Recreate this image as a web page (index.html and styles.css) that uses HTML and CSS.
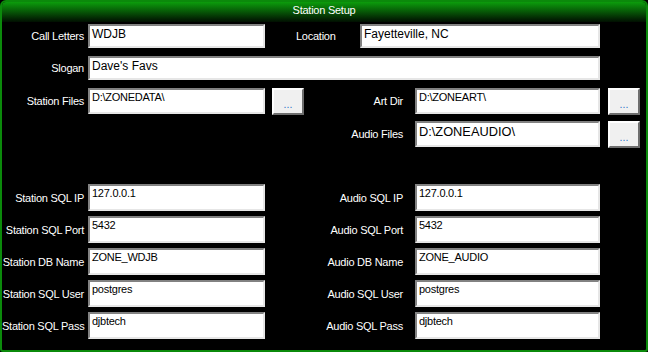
FILE: index.html
```html
<!DOCTYPE html>
<html lang="en">
<head>
    <meta charset="UTF-8">
    <title>Station Setup</title>
    <link rel="stylesheet" href="styles.css">
</head>
<body>
    <div class="window">
        <div class="titlebar">Station Setup</div>
        <div class="content">

            <div class="row r1">
                <span class="label lbl-left">Call Letters</span>
                <div class="field big w-left">WDJB</div>
                <span class="label lbl-location">Location</span>
                <div class="field big w-loc">Fayetteville, NC</div>
            </div>

            <div class="row r1">
                <span class="label lbl-left">Slogan</span>
                <div class="field big w-slogan">Dave's Favs</div>
            </div>

            <div class="row r3">
                <span class="label lbl-left">Station Files</span>
                <div class="field w-left">D:\ZONEDATA\</div>
                <button class="browse b-left">...</button>
                <span class="label lbl-art">Art Dir</span>
                <div class="field w-right">D:\ZONEART\</div>
                <button class="browse">...</button>
            </div>

            <div class="row r4">
                <span class="label lbl-art">Audio Files</span>
                <div class="field big2 w-right">D:\ZONEAUDIO\</div>
                <button class="browse">...</button>
            </div>

            <div class="sql">
                <div class="row sqlrow">
                    <span class="label lbl-left">Station SQL IP</span>
                    <div class="field w-left">127.0.0.1</div>
                    <span class="label lbl-right">Audio SQL IP</span>
                    <div class="field w-right">127.0.0.1</div>
                </div>
                <div class="row sqlrow">
                    <span class="label lbl-left">Station SQL Port</span>
                    <div class="field w-left">5432</div>
                    <span class="label lbl-right">Audio SQL Port</span>
                    <div class="field w-right">5432</div>
                </div>
                <div class="row sqlrow">
                    <span class="label lbl-left">Station DB Name</span>
                    <div class="field w-left">ZONE_WDJB</div>
                    <span class="label lbl-right">Audio DB Name</span>
                    <div class="field w-right">ZONE_AUDIO</div>
                </div>
                <div class="row sqlrow">
                    <span class="label lbl-left">Station SQL User</span>
                    <div class="field w-left">postgres</div>
                    <span class="label lbl-right">Audio SQL User</span>
                    <div class="field w-right">postgres</div>
                </div>
                <div class="row sqlrow">
                    <span class="label lbl-left">Station SQL Pass</span>
                    <div class="field w-left">djbtech</div>
                    <span class="label lbl-right">Audio SQL Pass</span>
                    <div class="field w-right">djbtech</div>
                </div>
            </div>

        </div>
    </div>
</body>
</html>
```

FILE: styles.css
```css
* {
    box-sizing: border-box;
}

body {
    margin: 0;
    background: #000;
    font-family: "Liberation Sans", Arial, sans-serif;
    color: #fff;
}

.window {
    width: 648px;
    height: 352px;
    border: 2px solid #0b8a0b;
    border-radius: 6px 6px 3px 3px;
    background: #000;
    overflow: hidden;
}

.titlebar {
    height: 20px;
    line-height: 16px;
    text-align: center;
    font-size: 11px;
    letter-spacing: -0.25px;
    background: linear-gradient(#0c9c0c, #000 22px);
}

.content {
    padding-top: 2px;
}

.row {
    display: flex;
    align-items: center;
}

.r1 {
    height: 24px;
    margin-bottom: 8px;
}

.r3 {
    height: 26px;
    margin-bottom: 7px;
}

.r4 {
    height: 26px;
    padding-left: 302px;
}

.sql {
    margin-top: 37px;
}

.sqlrow {
    height: 27px;
    margin-bottom: 5px;
}

.label {
    font-size: 11px;
    letter-spacing: -0.25px;
    white-space: nowrap;
}

.lbl-left {
    width: 82px;
    margin-right: 4px;
    text-align: right;
}

.lbl-location {
    width: 64px;
    margin-left: 31px;
}

.lbl-art {
    width: 99px;
    margin-right: 12px;
    text-align: right;
}

.lbl-right {
    width: 138px;
    margin-right: 12px;
    text-align: right;
}

.field {
    height: 100%;
    background: #fff;
    color: #000;
    font-size: 11px;
    letter-spacing: -0.25px;
    line-height: 13px;
    padding: 1px 2px;
    border: 2px solid;
    border-color: #828282 #e6e6e6 #e6e6e6 #828282;
    white-space: nowrap;
    overflow: hidden;
}

.field.big {
    font-size: 12px;
    letter-spacing: 0;
    line-height: 14px;
}

.field.big2 {
    font-size: 12.8px;
    letter-spacing: 0;
    line-height: 15px;
}

.w-left {
    width: 177px;
}

.w-right {
    width: 185px;
}

.w-loc {
    width: 240px;
}

.w-slogan {
    width: 512px;
}

.browse {
    width: 32px;
    height: 27px;
    margin-left: 8px;
    padding: 6px 0 0;
    background: #f0f0f0;
    color: #2a72c8;
    font-family: "Liberation Sans", Arial, sans-serif;
    font-size: 10.5px;
    border: 2px solid;
    border-color: #fff #6e6e6e #6e6e6e #fff;
}

.b-left {
    margin-left: 7px;
}
```
